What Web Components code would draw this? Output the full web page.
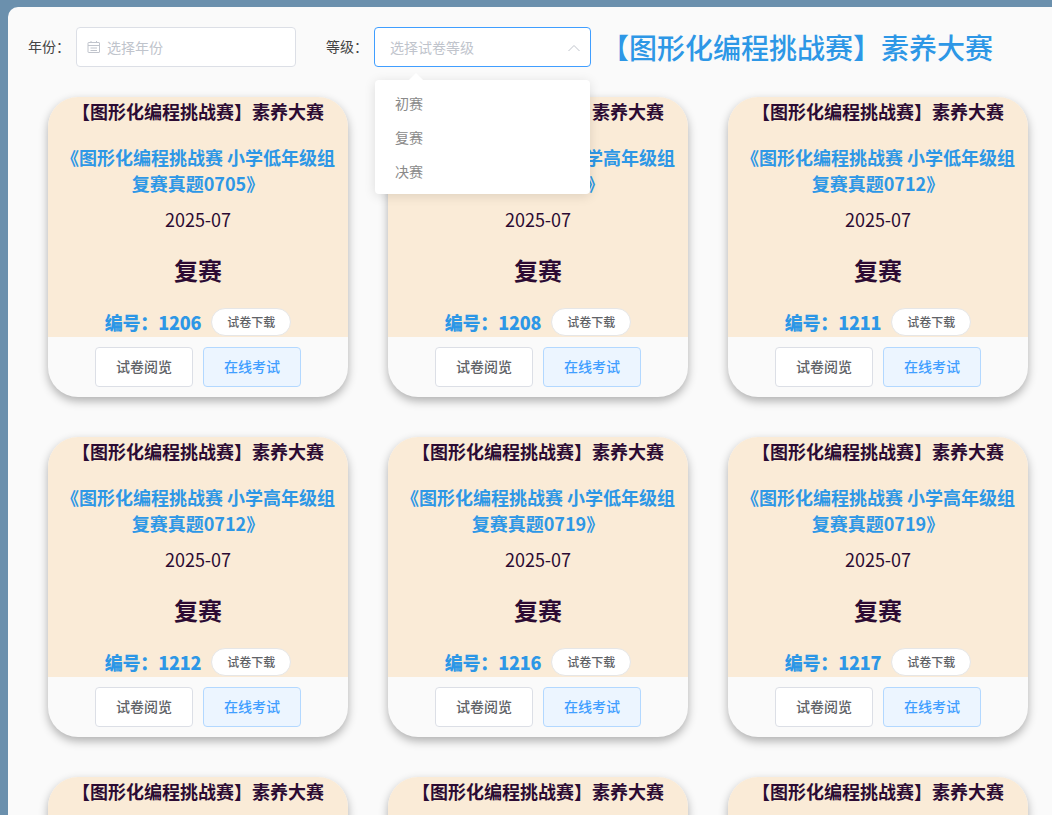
<!DOCTYPE html>
<html lang="zh"><head><meta charset="utf-8"><title>试卷</title>
<style>
html,body{margin:0;height:815px;overflow:hidden;background:#6b90ad;font-family:"Noto Sans CJK SC","Noto Sans",sans-serif}
body{padding:7px 0 0 8px;box-sizing:border-box}
</style></head><body>
<exam-page></exam-page>
<script>
const FONT='"Noto Sans CJK SC","Noto Sans",sans-serif';
class ExamField extends HTMLElement{
  constructor(){super();const a=this.attachShadow({mode:'open'});
  const open=this.hasAttribute('open');
  a.innerHTML=`<style>
  :host{display:flex;align-items:center;font:14px/20px ${FONT};color:#444}
  .lab{white-space:nowrap;margin-right:6px;padding-bottom:3px;font-size:14px}
  .box{box-sizing:border-box;width:var(--w,220px);height:40px;background:#fff;border:1px solid ${open?'#409eff':'#dcdfe6'};border-radius:4px;display:flex;align-items:center;color:#c0c4cc;font-size:14px;padding:0 ${open?'9px 0 15px':'10px'}}
  svg{flex:none}
  .ph{flex:1;padding-bottom:1px}
  </style><span class="lab"><slot name="label"></slot></span><div class="box"><slot name="icon"></slot><span class="ph"><slot></slot></span><slot name="end"></slot></div>`;}
}
customElements.define('exam-field',ExamField);

class ExamMenu extends HTMLElement{
  constructor(){super();this.attachShadow({mode:'open'}).innerHTML=`<style>
  :host{position:absolute;left:367px;top:73px;width:215px;height:114px;box-sizing:border-box;background:#fff;border-radius:4px;box-shadow:0 2px 12px rgba(0,0,0,.12);padding:6px 0;z-index:5;font:14px/34px ${FONT};color:#8a8a8a}
  :host::before{content:"";position:absolute;left:36px;top:-5px;width:10px;height:10px;background:#fff;transform:rotate(45deg)}
  div{padding:0 20px;height:34px;position:relative}
  </style><div>初赛</div><div>复赛</div><div>决赛</div>`;}
}
customElements.define('exam-menu',ExamMenu);

class ExamCard extends HTMLElement{
  constructor(){super();this.attachShadow({mode:'open'}).innerHTML=`<style>
  :host{display:flex;flex-direction:column;width:300px;height:300px;border-radius:30px;overflow:hidden;background:#fafafa;box-shadow:0 4px 10px rgba(0,0,0,.3);font-family:${FONT}}
  .top{height:240px;flex:none;background:#faebd7;box-sizing:border-box;display:flex;flex-direction:column;align-items:center;text-align:center;color:#2c0b33;overflow:hidden}
  .org{font-weight:700;font-size:18px;line-height:30px;height:30px;margin-top:-1px;white-space:nowrap}
  .name{font-weight:700;font-size:18px;line-height:26px;color:#2d97e6;margin-top:18px;width:290px;height:52px}
  .date{font-size:18px;line-height:26px;margin-top:10px}
  .level{font-weight:700;font-size:24px;line-height:36px;margin-top:20px}
  .no{display:flex;align-items:center;gap:10px;margin-top:18px;height:30px;color:#2d97e6;font-weight:700;font-size:18px}
  .no b{position:relative;top:1px;white-space:nowrap;letter-spacing:-.2px}
  .dl{box-sizing:border-box;width:80px;height:28px;border-radius:14px;background:#fff;border:1px solid #e6e6e6;color:#606266;font-size:12px;line-height:26px;font-weight:500;position:relative;top:1px}
  .foot{flex:1;display:flex;justify-content:center;gap:10px;padding-top:10px}
  .btn{box-sizing:border-box;width:98px;height:40px;border-radius:4px;border:1px solid #dcdfe6;background:#fff;color:#606266;font-size:14px;font-weight:500;line-height:36px;text-align:center}
  .pri{background:#ecf5ff;border-color:#b3d8ff;color:#409eff}
  </style>
  <div class="top"><div class="org">【图形化编程挑战赛】素养大赛</div>
  <div class="name"><slot></slot></div>
  <div class="date">2025-07</div><div class="level">复赛</div>
  <div class="no"><b>编号：<slot name="no"></slot></b><div class="dl">试卷下载</div></div></div>
  <div class="foot"><div class="btn">试卷阅览</div><div class="btn pri">在线考试</div></div>`;}
}
customElements.define('exam-card',ExamCard);

class ExamPage extends HTMLElement{
  constructor(){super();const a=this.attachShadow({mode:'open'});
  const cards=[['小学低年级组','0705',1206],['小学高年级组','0705',1208],['小学低年级组','0712',1211],['小学高年级组','0712',1212],['小学低年级组','0719',1216],['小学高年级组','0719',1217],['小学低年级组','0726',1218],['小学高年级组','0726',1219],['小学低年级组','0802',1220]];
  const colon='<span style="font-family:\'Noto Sans CJK TC\',sans-serif">：</span>';
  a.innerHTML=`<style>
  :host{display:block;position:relative;width:1044px;height:808px;overflow:hidden;background:#fafafa;border-radius:10px 0 0 0;font-family:${FONT}}
  .bar{display:flex;align-items:center;height:40px;padding:20px 0 0 20px}
  .t{font-size:28px;line-height:40px;font-weight:500;color:#2d97e6;white-space:nowrap;margin-left:10px}
  exam-field.y{margin-right:30px}
  .grid{display:grid;grid-template-columns:repeat(3,300px);gap:40px;padding:30px 0 0 40px}
  </style>
  <div class="bar">
  <exam-field class="y" style="--w:220px"><span slot="label">年份${colon}</span>
  <svg slot="icon" width="14" height="14" viewBox="0 0 14 14" fill="none" stroke="#c0c4cc" stroke-width="1" style="margin:0 6px 0 0;display:block"><rect x="1" y="2.5" width="11.5" height="10" rx=".5"/><path d="M1 5.5h11.5M4 1v1.5M9.5 1v1.5M3.5 8h6.5M3.5 10.5h6.5"/></svg>
  选择年份</exam-field>
  <exam-field open style="--w:217px"><span slot="label">等级${colon}</span>选择试卷等级
  <svg slot="end" width="14" height="14" viewBox="0 0 14 14" fill="none" stroke="#c0c4cc" stroke-width="1" style="margin-top:1px"><path d="M1.5 10 7 4.5l5.5 5.5"/></svg></exam-field>
  <div class="t">【图形化编程挑战赛】素养大赛</div></div>
  <exam-menu></exam-menu>
  <div class="grid">${cards.map(c=>`<exam-card>《图形化编程挑战赛 ${c[0]}<br>复赛真题${c[1]}》<span slot="no">${c[2]}</span></exam-card>`).join('')}</div>`;}
}
customElements.define('exam-page',ExamPage);
</script></body></html>
